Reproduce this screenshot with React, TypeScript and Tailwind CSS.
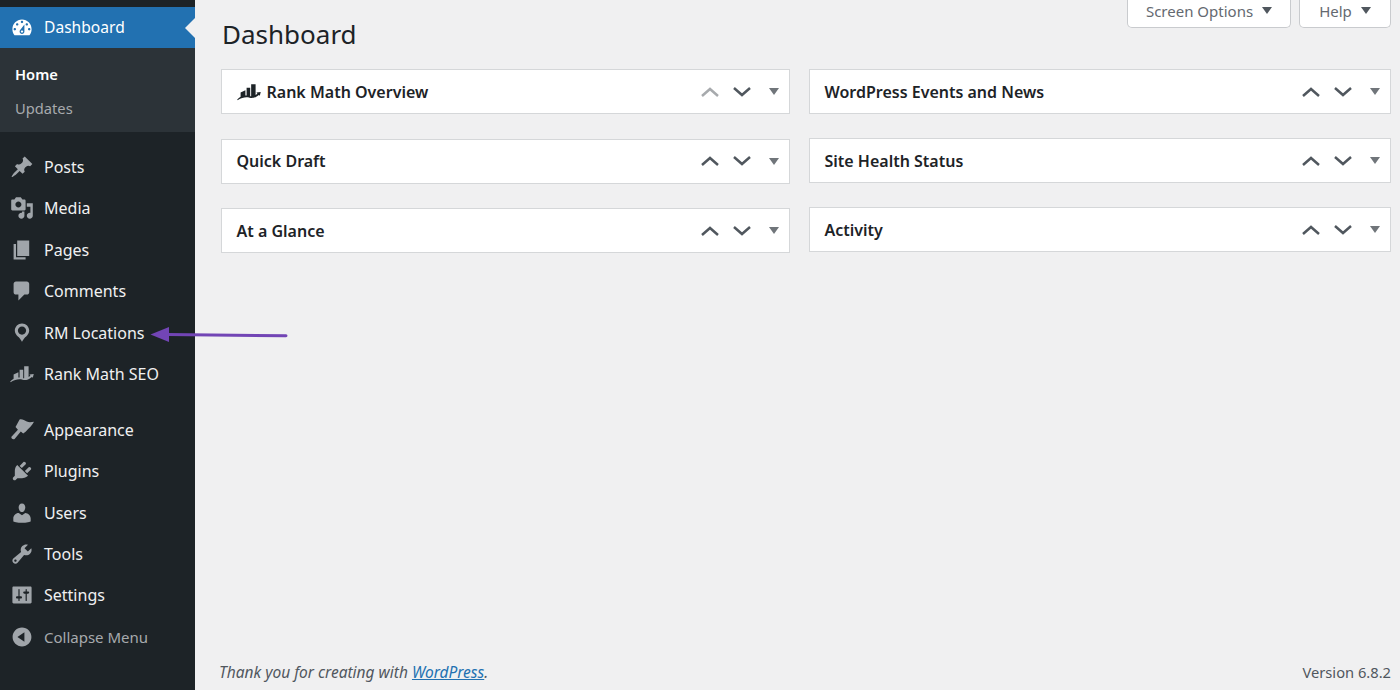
import React from 'react';

const icons: Record<string, string> = {
  dashboard: 'M3.76 16h12.48c1.1-1.37 1.76-3.11 1.76-5 0-4.42-3.58-8-8-8s-8 3.58-8 8c0 1.89.66 3.63 1.76 5zM10 4c.55 0 1 .45 1 1s-.45 1-1 1-1-.45-1-1 .45-1 1-1zM6 6c.55 0 1 .45 1 1s-.45 1-1 1-1-.45-1-1 .45-1 1-1zm8 0c.55 0 1 .45 1 1s-.45 1-1 1-1-.45-1-1 .45-1 1-1zm-5.37 5.55L12 7v6c0 1.1-.9 2-2 2s-2-.9-2-2c0-.57.24-1.08.63-1.45zM4 10c.55 0 1 .45 1 1s-.45 1-1 1-1-.45-1-1 .45-1 1-1zm12 0c.55 0 1 .45 1 1s-.45 1-1 1-1-.45-1-1 .45-1 1-1zm-5 3c0-.55-.45-1-1-1s-1 .45-1 1 .45 1 1 1 1-.45 1-1z',
  post: 'M10.44 3.02l1.82-1.82 6.36 6.35-1.83 1.82c-1.05-.68-2.48-.57-3.41.36l-.75.75c-.92.93-1.04 2.35-.35 3.41l-1.83 1.82-2.41-2.41-2.8 2.79c-.42.42-3.38 2.71-3.8 2.29s1.86-3.39 2.28-3.81l2.79-2.79L4.1 9.36l1.83-1.82c1.05.69 2.48.57 3.4-.36l.75-.75c.93-.92 1.05-2.35.36-3.41z',
  media: 'M13 11V4c0-.55-.45-1-1-1h-1.67L9 1H5L3.67 3H2c-.55 0-1 .45-1 1v7c0 .55.45 1 1 1h10c.55 0 1-.45 1-1zM7 4.5c1.38 0 2.5 1.12 2.5 2.5S8.38 9.5 7 9.5 4.5 8.38 4.5 7 5.62 4.5 7 4.5zM14 6h5v10.5c0 1.38-1.12 2.5-2.5 2.5S14 17.88 14 16.5s1.12-2.5 2.5-2.5c.17 0 .34.02.5.05V9h-3V6zm-4 8.05V13h2v3.5c0 1.38-1.12 2.5-2.5 2.5S7 17.88 7 16.5 8.12 14 9.5 14c.17 0 .34.02.5.05z',
  page: 'M6 15V2h10v13H6zm-1 1h8v2H3V5h2v11z',
  comments: 'M5 2h9c1.1 0 2 .9 2 2v7c0 1.1-.9 2-2 2h-2l-5 5v-5H5c-1.1 0-2-.9-2-2V4c0-1.1.9-2 2-2z',
  location: 'M10 2C6.69 2 4 4.69 4 8c0 2.02 1.17 3.71 2.53 4.89.43.37 1.18.96 1.85 1.83.74.97 1.41 2.01 1.62 2.71.21-.7.88-1.74 1.62-2.71.67-.87 1.42-1.46 1.85-1.83C14.83 11.71 16 10.02 16 8c0-3.31-2.69-6-6-6zm0 2.56c1.9 0 3.44 1.54 3.44 3.44S11.9 11.44 10 11.44 6.56 9.9 6.56 8 8.1 4.56 10 4.56z',
  rankmath: 'M3 14V10.5L7 8.6V13H8V6.5H11V13.5H11.8V3.5H15.5V12.5L17 11.5L16.2 10.5L19.8 10L19 13.2L18.2 12.4C15 15 13 15.3 10.5 14.8C7.5 14 4.5 14.5 .5 16.8L.2 16.2C1 15.5 2 14.6 3 14Z',
  appearance: 'M8 1.2C10 .5 12 2 14 3C16 4 18 3.5 20 3.2C18.5 6 16 8.5 13 11.5L11 13L9 11.3L4 17.2C3 18.4 .6 17.2 1.2 15.6L6.6 9.8L4.6 7.5Z',
  plugins: 'M13.11 4.36L9.87 7.6 8 5.73l3.24-3.24c.35-.34 1.05-.2 1.56.32.52.51.66 1.21.31 1.55zm-8 1.77l.91-1.12 9.01 9.01-1.19.84c-.71.71-2.63 1.16-3.82 1.16H6.14L4.9 17.26c-.59.59-1.54.59-2.12 0-.59-.58-.59-1.53 0-2.12l1.24-1.24v-3.88c0-1.13.4-3.19 1.09-3.89zm7.26 3.97l3.24-3.24c.34-.35 1.04-.21 1.55.31.52.51.66 1.21.31 1.55l-3.24 3.25z',
  users: 'M10 9.25c-2.27 0-2.73-3.44-2.73-3.44C7 4.02 7.82 2 9.97 2c2.16 0 2.98 2.02 2.71 3.81 0 0-.41 3.44-2.68 3.44zm0 2.57L12.72 10c2.39 0 4.52 2.33 4.52 4.53v2.49s-3.65 1.13-7.24 1.13c-3.65 0-7.24-1.13-7.24-1.13v-2.49c0-2.25 1.94-4.48 4.47-4.48z',
  tools: 'M16.68 9.77c-1.34 1.34-3.3 1.67-4.95.99l-5.41 6.52c-.99.99-2.59.99-3.58 0s-.99-2.59 0-3.57l6.52-5.42c-.68-1.65-.35-3.61.99-4.95 1.28-1.28 3.12-1.62 4.72-1.06l-2.89 2.89 2.82 2.82 2.86-2.87c.53 1.58.18 3.39-1.08 4.65zM3.81 16.21c.4.39 1.04.39 1.43 0 .4-.4.4-1.04 0-1.43-.39-.4-1.03-.4-1.43 0-.39.39-.39 1.03 0 1.43z',
  settings: 'M18 16V4c0-.55-.45-1-1-1H3c-.55 0-1 .45-1 1v12c0 .55.45 1 1 1h14c.55 0 1-.45 1-1zM8 11h1c.55 0 1 .45 1 1s-.45 1-1 1H8v1.5c0 .28-.22.5-.5.5s-.5-.22-.5-.5V13H6c-.55 0-1-.45-1-1s.45-1 1-1h1V5.5c0-.28.22-.5.5-.5s.5.22.5.5V11zm5-2h-1c-.55 0-1-.45-1-1s.45-1 1-1h1V5.5c0-.28.22-.5.5-.5s.5.22.5.5V7h1c.55 0 1 .45 1 1s-.45 1-1 1h-1v5.5c0 .28-.22.5-.5.5s-.5-.22-.5-.5V9z',
  collapse: 'M10 2.16c4.33 0 7.84 3.51 7.84 7.84s-3.51 7.84-7.84 7.84S2.16 14.33 2.16 10 5.71 2.16 10 2.16zm2 11.72V6.12L6.18 9.97z',
};

function Dashicon({ name, className }: { name: string; className: string }) {
  return (
    <svg viewBox="0 0 20 20" fill="currentColor" className={className}>
      <path fillRule="evenodd" d={icons[name]} />
    </svg>
  );
}

function MenuRow({ icon, label }: { icon: string; label: string }) {
  return (
    <div className="flex h-[41.4px] items-center text-[16px] text-[#f0f0f1]">
      <div className="flex w-[44px] justify-center pr-[1px]">
        <Dashicon name={icon} className="h-[24px] w-[24px] text-[#a0a5aa]" />
      </div>
      <span>{label}</span>
    </div>
  );
}

function Caret({ className }: { className: string }) {
  return (
    <svg viewBox="0 0 10 7" fill="currentColor" className={className}>
      <path d="M0 0h10L5 7z" />
    </svg>
  );
}

function Chevron({ up, muted }: { up?: boolean; muted?: boolean }) {
  return (
    <svg viewBox="0 0 18 10" fill="none" stroke="currentColor" strokeWidth="2.5" className={`h-[10px] w-[18px] ${muted ? 'text-[#a7aaad]' : 'text-[#50575e]'}`}>
      <path d={up ? 'M1 9l8-7 8 7' : 'M1 1l8 7 8-7'} />
    </svg>
  );
}

function Widget({ title, logo, upMuted }: { title: string; logo?: boolean; upMuted?: boolean }) {
  return (
    <div className="flex h-[45px] items-center border border-[#d5d7d9] bg-white pl-[14.5px] pr-[10px]">
      {logo && <Dashicon name="rankmath" className="mr-[6px] h-[24px] w-[24px] text-[#1d2327]" />}
      <h2 className="text-[16px] font-semibold text-[#1d2327]">{title}</h2>
      <div className="ml-auto flex items-center">
        <Chevron up muted={upMuted} />
        <div className="ml-[14px]"><Chevron /></div>
        <Caret className="ml-[18px] h-[7px] w-[10px] text-[#70757a]" />
      </div>
    </div>
  );
}

export default function App() {
  return (
    <div className="relative flex h-[690px] w-[1400px] overflow-hidden bg-[#f0f0f1] font-['Noto_Sans',sans-serif]">
      <aside className="w-[195px] shrink-0 bg-[#1d2327] pt-[7px]">
        <div className="relative flex h-[41px] items-center bg-[#2271b1] pt-[1px] text-[15.6px] text-white">
          <div className="flex w-[44px] justify-center pr-[1px]">
            <Dashicon name="dashboard" className="h-[24px] w-[24px]" />
          </div>
          <span>Dashboard</span>
          <div className="absolute right-0 top-[11px] h-0 w-0 border-y-[10px] border-r-[10px] border-y-transparent border-r-[#f0f0f1]" />
        </div>
        <div className="flex h-[84px] flex-col justify-center gap-[12px] bg-[#2c3338] pl-[15px] pt-[2px] text-[14.7px]">
          <div className="font-semibold text-white">Home</div>
          <div className="text-[#a7aaad]">Updates</div>
        </div>
        <div className="pt-[14.4px]">
          <MenuRow icon="post" label="Posts" />
          <MenuRow icon="media" label="Media" />
          <MenuRow icon="page" label="Pages" />
          <MenuRow icon="comments" label="Comments" />
          <MenuRow icon="location" label="RM Locations" />
          <MenuRow icon="rankmath" label="Rank Math SEO" />
        </div>
        <div className="pt-[14.4px]">
          <MenuRow icon="appearance" label="Appearance" />
          <MenuRow icon="plugins" label="Plugins" />
          <MenuRow icon="users" label="Users" />
          <MenuRow icon="tools" label="Tools" />
          <MenuRow icon="settings" label="Settings" />
          <div className="flex h-[41.4px] items-center text-[15px] text-[#a7aaad]">
            <div className="flex w-[44px] justify-center pr-[1px]">
              <Dashicon name="collapse" className="h-[24px] w-[24px] text-[#a0a5aa]" />
            </div>
            <span>Collapse Menu</span>
          </div>
        </div>
      </aside>

      <main className="flex min-w-0 flex-1 flex-col pl-[26px] pr-[9px]">
        <div className="flex justify-end gap-[8px]">
          <div className="flex h-[28px] w-[164px] items-center justify-center gap-[9px] rounded-b-[5px] border border-t-0 border-[#c9cbce] bg-white pb-[4px] text-[15px] text-[#646970]">
            <span>Screen Options</span>
            <Caret className="mb-[2px] h-[7px] w-[10px] text-[#50575e]" />
          </div>
          <div className="flex h-[28px] w-[92px] items-center justify-center gap-[9px] rounded-b-[5px] border border-t-0 border-[#c9cbce] bg-white pb-[4px] text-[15px] text-[#646970]">
            <span>Help</span>
            <Caret className="mb-[2px] h-[7px] w-[10px] text-[#50575e]" />
          </div>
        </div>
        <h1 className="-mt-[12px] ml-[1px] text-[26px] leading-[36px] text-[#1d2327]">Dashboard</h1>
        <div className="mt-[17px] grid grid-cols-[569px_582px] gap-x-[19px]">
          <div className="flex flex-col gap-[24.5px]">
            <Widget title="Rank Math Overview" logo upMuted />
            <Widget title="Quick Draft" />
            <Widget title="At a Glance" />
          </div>
          <div className="flex flex-col gap-[24px]">
            <Widget title="WordPress Events and News" />
            <Widget title="Site Health Status" />
            <Widget title="Activity" />
          </div>
        </div>
        <footer className="-ml-[2px] mt-auto flex items-center justify-between pb-[6px] text-[15.5px] text-[#50575e]">
          <span className="italic">
            Thank you for creating with <a className="text-[#2271b1] underline">WordPress</a>.
          </span>
          <span className="text-[14.7px]">Version 6.8.2</span>
        </footer>
      </main>

      <svg viewBox="0 0 140 20" className="absolute left-[149px] top-[325px] h-[20px] w-[140px]" fill="none">
        <path d="M18 9.5 L137 10.8" stroke="#7245b5" strokeWidth="3" strokeLinecap="round" />
        <path d="M1.5 9.5 L20 2 L20 17 Z" fill="#7245b5" />
      </svg>
    </div>
  );
}
